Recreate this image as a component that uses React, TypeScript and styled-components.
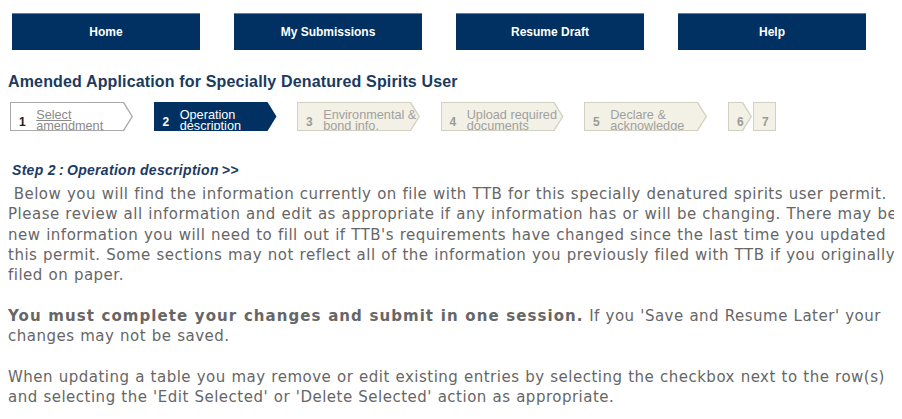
import React from 'react'
import styled, { createGlobalStyle } from 'styled-components'

const GlobalStyle = createGlobalStyle`
  body {
    margin: 8px;
    background: #ffffff;
    font-family: "Liberation Sans", Arial, sans-serif;
  }
`

const Nav = styled.div`
  display: flex;
  gap: 34px;
  padding: 5px 0 0 4px;
`

const NavButton = styled.a`
  display: flex;
  align-items: center;
  justify-content: center;
  width: 188px;
  height: 37px;
  box-sizing: border-box;
  background: #003162;
  border-top: 1px solid #5a7fa8;
  color: #ffffff;
  font-weight: bold;
  font-size: 12px;
  text-decoration: none;
`

const Title = styled.h1`
  margin: 23px 0 0 0;
  font-size: 16px;
  line-height: 18px;
  letter-spacing: 0.15px;
  color: #1b3a5e;
`

const Steps = styled.div`
  display: flex;
  margin: 11px 0 0 2px;
  height: 29px;
`

type StepKind = 'done' | 'current' | 'todo'

const palette: Record<StepKind, { edge: string; fill: string; num: string; text: string }> = {
  done: { edge: '#a8a8a8', fill: '#ffffff', num: '#222222', text: '#8a8a8a' },
  current: { edge: '#003162', fill: '#003162', num: '#ffffff', text: '#ffffff' },
  todo: { edge: '#d2d0c2', fill: '#f3f1e5', num: '#9a9a9a', text: '#a0a0a0' },
}

const Step = styled.div<{ $kind: StepKind; $w: number; $arrow: boolean; $gap: number }>`
  position: relative;
  flex: none;
  width: ${({ $w }) => $w}px;
  height: 29px;
  margin-right: ${({ $gap }) => $gap}px;
  background: ${({ $kind }) => palette[$kind].edge};
  clip-path: ${({ $arrow }) =>
    $arrow
      ? 'polygon(0 0, calc(100% - 9px) 0, 100% 50%, calc(100% - 9px) 100%, 0 100%)'
      : 'none'};

  &::before {
    content: '';
    position: absolute;
    inset: ${({ $arrow }) => ($arrow ? '1px 1.5px 1px 1px' : '1px')};
    background: ${({ $kind }) => palette[$kind].fill};
    clip-path: ${({ $arrow }) =>
      $arrow
        ? 'polygon(0 0, calc(100% - 8.5px) 0, 100% 50%, calc(100% - 8.5px) 100%, 0 100%)'
        : 'none'};
  }
`

const StepInner = styled.div`
  position: absolute;
  inset: 1px;
  display: flex;
  align-items: flex-start;
  padding: 6.5px 0 0 8px;
  overflow: hidden;
`

const StepNum = styled.span<{ $kind: StepKind }>`
  flex: none;
  margin: 6px 10.5px 0 0;
  font-size: 12px;
  font-weight: bold;
  line-height: 12px;
  color: ${({ $kind }) => palette[$kind].num};
`

const StepLabel = styled.span<{ $kind: StepKind }>`
  font-size: 12.7px;
  line-height: 11px;
  white-space: nowrap;
  color: ${({ $kind }) => palette[$kind].text};
  text-decoration: ${({ $kind }) => ($kind === 'done' ? 'underline' : 'none')};
`

const StepHeading = styled.h2`
  margin: 31px 0 0 4px;
  font-size: 14px;
  line-height: 16px;
  letter-spacing: 0.3px;
  font-style: italic;
  font-weight: bold;
  color: #1e3a62;
`

const Body = styled.div`
  margin: 6px -8px 0 0;
  font-family: "DejaVu Sans", Verdana, sans-serif;
  font-size: 15px;
  line-height: 20.3px;
  letter-spacing: 0.5px;
  word-spacing: 0.4px;
  color: #666666;
`

const Strong = styled.b`
  font-weight: bold;
  letter-spacing: 1.05px;
`

const steps: { n: string; label: React.ReactNode; kind: StepKind; w: number; arrow: boolean; gap: number }[] = [
  { n: '1', label: <>Select<br />amendment</>, kind: 'done', w: 123, arrow: true, gap: 20.5 },
  { n: '2', label: <>Operation<br />description</>, kind: 'current', w: 123, arrow: true, gap: 20.5 },
  { n: '3', label: <>Environmental &amp;<br />bond info.</>, kind: 'todo', w: 123, arrow: true, gap: 20.5 },
  { n: '4', label: <>Upload required<br />documents</>, kind: 'todo', w: 123, arrow: true, gap: 20.5 },
  { n: '5', label: <>Declare &amp;<br />acknowledge</>, kind: 'todo', w: 123, arrow: true, gap: 21 },
  { n: '6', label: null, kind: 'todo', w: 24, arrow: true, gap: 1 },
  { n: '7', label: null, kind: 'todo', w: 23, arrow: false, gap: 0 },
]

export default function App() {
  return (
    <>
      <GlobalStyle />
      <Nav>
        <NavButton>Home</NavButton>
        <NavButton>My Submissions</NavButton>
        <NavButton>Resume Draft</NavButton>
        <NavButton>Help</NavButton>
      </Nav>
      <Title>Amended Application for Specially Denatured Spirits User</Title>
      <Steps>
        {steps.map((s) => (
          <Step key={s.n} $kind={s.kind} $w={s.w} $arrow={s.arrow} $gap={s.gap}>
            <StepInner>
              <StepNum $kind={s.kind}>{s.n}</StepNum>
              {s.label && <StepLabel $kind={s.kind}>{s.label}</StepLabel>}
            </StepInner>
          </Step>
        ))}
      </Steps>
      <StepHeading>Step 2&thinsp;:&thinsp;Operation description&thinsp;&gt;&gt;</StepHeading>
      <Body>
        &nbsp;Below you will find the information currently on file with TTB for this specially denatured spirits user permit.
        Please review all information and edit as appropriate if any information has or will be changing. There may be
        new information you will need to fill out if TTB's requirements have changed since the last time you updated
        this permit. Some sections may not reflect all of the information you previously filed with TTB if you originally
        filed on paper.
        <br />
        <br />
        <Strong>You must complete your changes and submit in one session.</Strong> If you 'Save and Resume Later' your
        changes may not be saved.
        <br />
        <br />
        When updating a table you may remove or edit existing entries by selecting the checkbox next to the row(s) and
        selecting the 'Edit Selected' or 'Delete Selected' action as appropriate.
      </Body>
    </>
  )
}
